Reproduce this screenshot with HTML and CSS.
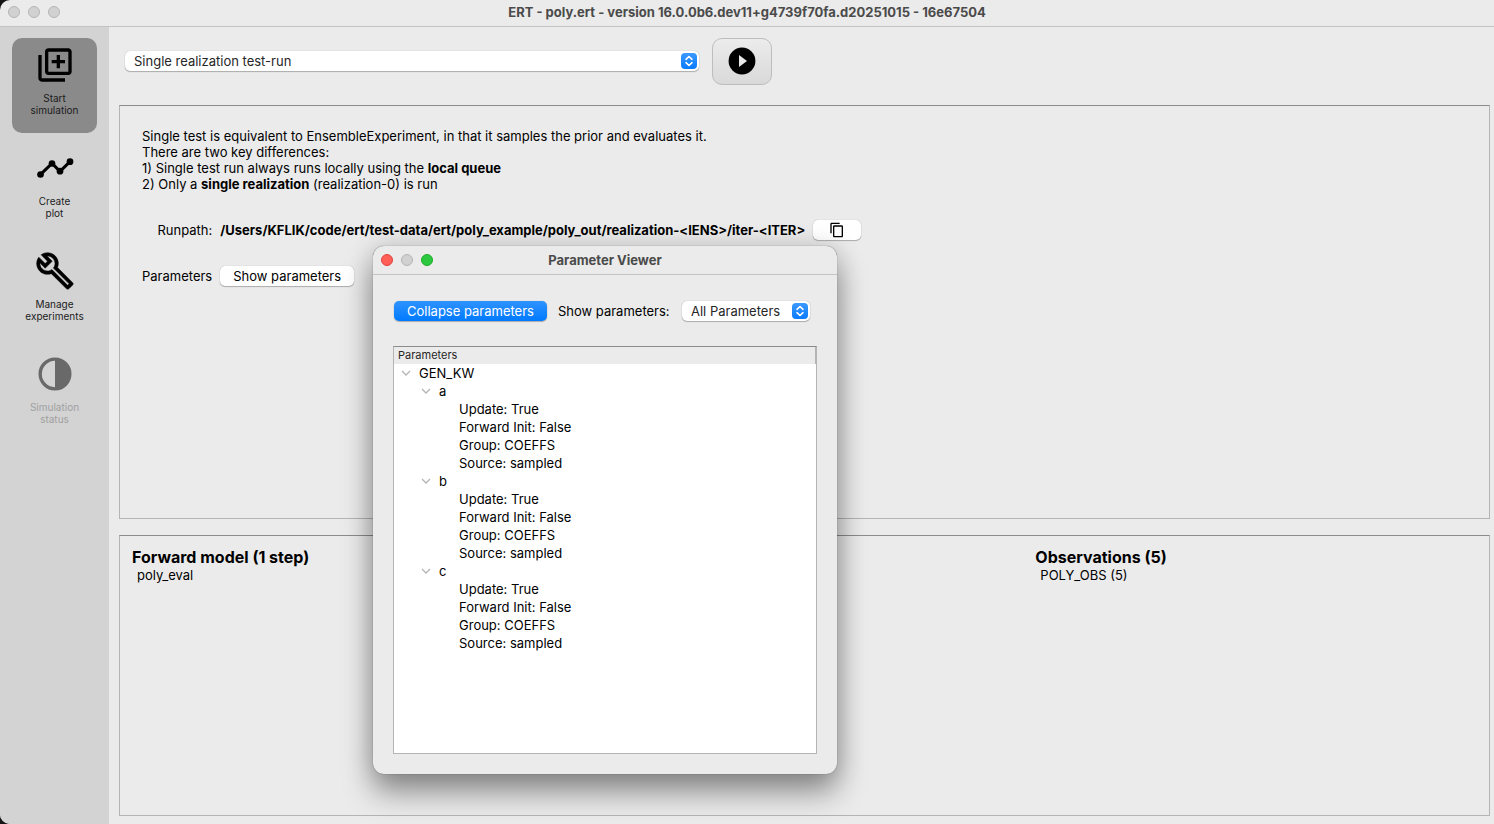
FILE: index.html
```html
<!DOCTYPE html>
<html lang="en">
<head>
    <meta charset="UTF-8">
    <title>ERT - poly.ert</title>
    <link rel="stylesheet" href="styles.css">
</head>
<body>
    <div class="window">
        <header class="titlebar">
            <div class="lights">
                <span class="light"></span>
                <span class="light"></span>
                <span class="light"></span>
            </div>
            <h1>ERT - poly.ert - version 16.0.0b6.dev11+g4739f70fa.d20251015 - 16e67504</h1>
        </header>

        <div class="main">
            <nav class="sidebar">
                <button class="nav-btn active" type="button">
                    <svg viewBox="0 0 24 24"><path d="M4 6H2v14c0 1.100.9 2 2 2h14v-2H4V6zm16-4H8c-1.100 0-2 .9-2 2v12c0 1.100.9 2 2 2h12c1.100 0 2-.9 2-2V4c0-1.100-.9-2-2-2zm0 14H8V4h12v12zm-7-2h2v-3h3V9h-3V6h-2v3h-3v2h3z"/></svg>
                    <span>Start<br>simulation</span>
                </button>
                <button class="nav-btn" type="button">
                    <svg viewBox="0 0 24 24"><path d="M3.200 16L10.200 9.200L15 14L21 8.200" fill="none" stroke="#000" stroke-width="1.800"/><circle cx="3.300" cy="15.900" r="2"/><circle cx="10.200" cy="9.300" r="2"/><circle cx="15" cy="13.900" r="2"/><circle cx="21" cy="8.200" r="2"/></svg>
                    <span>Create<br>plot</span>
                </button>
                <button class="nav-btn" type="button">
                    <svg viewBox="0 0 24 24"><path d="M22.610 18.990l-9.080-9.080c.93-2.340.45-5.100-1.440-7C9.790.61 6.210.4 3.660 2.260L7.500 6.110 6.080 7.520 2.250 3.690C.39 6.230.6 9.820 2.900 12.110c1.860 1.860 4.570 2.350 6.890 1.480l9.110 9.110c.39.39 1.020.39 1.410 0l2.300-2.300c.4-.38.4-1.010 0-1.410zm-3 1.600l-9.460-9.460c-.61.45-1.290.72-2 .82-1.360.2-2.790-.21-3.830-1.250C3.370 9.760 2.930 8.500 3 7.260l3.090 3.090 4.240-4.240-3.090-3.090c1.240-.07 2.490.37 3.440 1.310 1.080 1.080 1.490 2.570 1.240 3.960-.12.71-.42 1.370-.88 1.960l9.450 9.450-.88.89z" stroke="#000" stroke-width=".3"/></svg>
                    <span>Manage<br>experiments</span>
                </button>
                <button class="nav-btn" type="button" disabled>
                    <svg viewBox="0 0 24 24"><circle cx="12" cy="12" r="8.900" fill="none" stroke="#696969" stroke-width="2"/><path d="M12 2.500a9.500 9.500 0 0 1 0 19z" fill="#696969"/></svg>
                    <span>Simulation<br>status</span>
                </button>
            </nav>

            <main class="content">
                <div class="run-bar">
                    <div class="select run-select">
                        <select aria-label="Experiment type">
                            <option>Single realization test-run</option>
                        </select>
                        <svg class="stepper" viewBox="0 0 16 16"><path d="M5 6.300L8 3.500L11 6.300M5 9.700L8 12.500L11 9.700"/></svg>
                    </div>
                    <button class="run-btn" type="button" aria-label="Run">
                        <svg viewBox="0 0 28 28"><circle cx="14" cy="14" r="13.400"/><path d="M11 8v12l8-6z" fill="#e8e8e8"/></svg>
                    </button>
                </div>

                <section class="panel experiment">
                    <p>
                        Single test is equivalent to EnsembleExperiment, in that it samples the prior and evaluates it.<br>
                        There are two key differences:<br>
                        1) Single test run always runs locally using the <b>local queue</b><br>
                        2) Only a <b>single realization</b> (realization-0) is run
                    </p>
                    <div class="fields">
                        <span class="label">Runpath:</span>
                        <div class="runpath">
                            <b>/Users/KFLIK/code/ert/test-data/ert/poly_example/poly_out/realization-&lt;IENS&gt;/iter-&lt;ITER&gt;</b>
                            <button class="btn copy-btn" type="button" aria-label="Copy runpath">
                                <svg viewBox="0 0 24 24"><path d="M16 1H4c-1.100 0-2 .9-2 2v14h2V3h12V1zm3 4H8c-1.100 0-2 .9-2 2v14c0 1.100.9 2 2 2h11c1.100 0 2-.9 2-2V7c0-1.100-.9-2-2-2zm0 16H8V7h11v14z"/></svg>
                            </button>
                        </div>
                        <span class="label">Parameters</span>
                        <button class="btn show-btn" type="button">Show parameters</button>
                    </div>
                </section>

                <section class="panel summary">
                    <div class="forward-model">
                        <h2>Forward model (1 step)</h2>
                        <div class="item">poly_eval</div>
                    </div>
                    <div class="observations">
                        <h2>Observations (5)</h2>
                        <div class="item">POLY_OBS (5)</div>
                    </div>
                </section>
            </main>
        </div>

        <div class="dialog" role="dialog" aria-labelledby="dialog-title">
            <div class="titlebar">
                <div class="lights">
                    <span class="light red"></span>
                    <span class="light"></span>
                    <span class="light green"></span>
                </div>
                <h1 id="dialog-title">Parameter Viewer</h1>
            </div>
            <div class="dialog-body">
                <div class="toolbar">
                    <button class="btn primary" type="button">Collapse parameters</button>
                    <label for="filter">Show parameters:</label>
                    <div class="select filter-select">
                        <select id="filter">
                            <option>All Parameters</option>
                        </select>
                        <svg class="stepper" viewBox="0 0 16 16"><path d="M5 6.300L8 3.500L11 6.300M5 9.700L8 12.500L11 9.700"/></svg>
                    </div>
                </div>
                <div class="tree">
                    <div class="tree-head">Parameters</div>
                    <details open>
                        <summary><svg class="chevron" viewBox="0 0 10 10"><path d="M1 3L5 7L9 3"/></svg>GEN_KW</summary>
                        <details open>
                            <summary><svg class="chevron" viewBox="0 0 10 10"><path d="M1 3L5 7L9 3"/></svg>a</summary>
                            <ul>
                                <li>Update: True</li>
                                <li>Forward Init: False</li>
                                <li>Group: COEFFS</li>
                                <li>Source: sampled</li>
                            </ul>
                        </details>
                        <details open>
                            <summary><svg class="chevron" viewBox="0 0 10 10"><path d="M1 3L5 7L9 3"/></svg>b</summary>
                            <ul>
                                <li>Update: True</li>
                                <li>Forward Init: False</li>
                                <li>Group: COEFFS</li>
                                <li>Source: sampled</li>
                            </ul>
                        </details>
                        <details open>
                            <summary><svg class="chevron" viewBox="0 0 10 10"><path d="M1 3L5 7L9 3"/></svg>c</summary>
                            <ul>
                                <li>Update: True</li>
                                <li>Forward Init: False</li>
                                <li>Group: COEFFS</li>
                                <li>Source: sampled</li>
                            </ul>
                        </details>
                    </details>
                </div>
            </div>
        </div>
    </div>
</body>
</html>
```
FILE: styles.css
```css
*{
    box-sizing: border-box;
}
html{
    background: #151515;
}
body{
    margin: 0;
    font-family: Inter, "Liberation Sans", sans-serif;
    font-size: 13px;
    line-height: 16px;
    color: #000;
}
button, select{
    font: inherit;
    color: inherit;
    margin: 0;
    border: 0;
}
.window{
    position: relative;
    display: flex;
    flex-direction: column;
    min-height: 100vh;
    background: #ebebeb;
    border-radius: 10px 0 0 10px;
    overflow: hidden;
}

/* title bars */
.titlebar{
    display: grid;
    grid-template-columns: 1fr auto 1fr;
    align-items: center;
    height: 27px;
    padding: 0 8px;
    border-bottom: 1px solid #c4c4c4;
    color: #4a4a4a;
}
.titlebar h1{
    margin: 0;
    font-size: 13px;
    line-height: 16px;
    font-weight: 700;
}
.window > .titlebar{
    padding-bottom: 3px;
}
.lights{
    display: flex;
    gap: 8px;
}
.light{
    width: 12px;
    height: 12px;
    border: 1px solid #b5b5b5;
    border-radius: 50%;
    background: #d1d1d1;
}
.light.red{
    background: #ff5f57;
    border-color: #e0443e;
}
.light.green{
    background: #2bc840;
    border-color: #1dad2b;
}

/* sidebar */
.main{
    flex: 1;
    display: flex;
}
.sidebar{
    flex: none;
    display: flex;
    flex-direction: column;
    gap: 8px;
    width: 109px;
    padding: 11px 12px;
    background: #d3d3d3;
}
.nav-btn{
    display: flex;
    flex-direction: column;
    align-items: center;
    gap: 7px;
    height: 95px;
    padding: 7px 0 0;
    border-radius: 10px;
    background: none;
    font-size: 10px;
    line-height: 12px;
    color: #1c1c1c;
}
.nav-btn svg{
    width: 40px;
    height: 40px;
}
.nav-btn.active{
    background: #8a8a8a;
}
.nav-btn:disabled{
    color: #a0a0a0;
}

/* content */
.content{
    flex: 1;
    display: flex;
    flex-direction: column;
    padding: 0 4px 8px 10px;
}
.run-bar{
    display: flex;
    align-items: center;
    gap: 13px;
    height: 78px;
    padding: 0 6px 10px;
}
.select{
    position: relative;
}
.select select{
    display: block;
    width: 100%;
    height: 20px;
    padding: 0 24px 0 9px;
    appearance: none;
    border-radius: 5px;
    background: #fff;
    box-shadow: 0 0 1px rgba(0, 0, 0, 0.3), 0 1px 1px rgba(0, 0, 0, 0.25);
    color: #262626;
}
.stepper{
    position: absolute;
    top: 2px;
    right: 2px;
    width: 16px;
    height: 16px;
    border-radius: 4px;
    background: linear-gradient(#3c9aff, #0a7aff);
    fill: none;
    stroke: #fff;
    stroke-width: 1.600;
    stroke-linecap: round;
    stroke-linejoin: round;
    pointer-events: none;
}
.run-select{
    width: 574px;
}
.run-btn{
    display: flex;
    align-items: center;
    justify-content: center;
    width: 60px;
    height: 47px;
    border: 1px solid #bdbdbd;
    border-radius: 10px;
    background: linear-gradient(#ececec, #d9d9d9);
}
.run-btn svg{
    width: 28px;
    height: 28px;
}
.panel{
    border: 1px solid #b4b4b4;
    border-top-color: #8c8c8c;
}
.experiment{
    flex: 368 0 0;
    padding: 22px;
}
.experiment p{
    margin: 0;
}
b{
    font-weight: 700;
}
.fields{
    display: grid;
    grid-template-columns: max-content max-content;
    align-items: center;
    gap: 25px 8px;
    margin-top: 27px;
}
.label{
    text-align: right;
}
.runpath{
    display: flex;
    align-items: center;
    gap: 8px;
    height: 22px;
}
.btn{
    height: 20px;
    padding: 0 13px;
    border-radius: 5px;
    background: #fff;
    box-shadow: 0 0 1px rgba(0, 0, 0, 0.3), 0 1px 1px rgba(0, 0, 0, 0.25);
    white-space: nowrap;
}
.copy-btn{
    display: flex;
    align-items: center;
    justify-content: center;
    width: 48px;
}
.copy-btn svg{
    flex: none;
    width: 16px;
    height: 16px;
}
.show-btn{
    justify-self: start;
}
.summary{
    flex: 267 0 0;
    display: grid;
    grid-template-columns: repeat(3, 1fr);
    align-content: start;
    margin-top: 16px;
    padding: 12px 2px 0 12px;
}
.observations{
    grid-column: 3;
}
.summary h2{
    margin: 0;
    font-size: 16px;
    line-height: 19px;
    font-weight: 700;
}
.item{
    padding-left: 5px;
}

/* parameter viewer */
.dialog{
    position: absolute;
    top: 246px;
    left: 373px;
    width: 464px;
    border-radius: 11px;
    background: #ebebeb;
    box-shadow: 0 0 1px rgba(0, 0, 0, 0.6), 0 18px 30px rgba(0, 0, 0, 0.4), 0 0 26px rgba(0, 0, 0, 0.14);
}
.dialog .titlebar{
    height: 29px;
}
.dialog-body{
    padding: 25px 20px 20px;
}
.toolbar{
    display: flex;
    align-items: center;
    gap: 11px;
    height: 22px;
    margin-bottom: 24px;
    padding: 0 7px 0 1px;
    white-space: nowrap;
}
.primary{
    background: linear-gradient(#2f93ff, #007aff);
    color: #fff;
}
.filter-select{
    flex: none;
    width: 128px;
    margin-left: auto;
}
.tree{
    min-height: 408px;
    border: 1px solid #b4b4b4;
    border-top-color: #8c8c8c;
    background: #fff;
    line-height: 18px;
}
.tree-head{
    height: 17px;
    padding-left: 4px;
    border-right: 1px solid #b4b4b4;
    background: #ebebeb;
    font-size: 11px;
    line-height: 17px;
    color: #262626;
}
summary{
    display: flex;
    align-items: center;
    gap: 8px;
    height: 18px;
    padding-left: 7px;
    list-style: none;
}
details details{
    padding-left: 20px;
}
.chevron{
    width: 10px;
    height: 10px;
    fill: none;
    stroke: #b4b4b4;
    stroke-width: 1.300;
}
.tree ul{
    margin: 0;
    padding: 0 0 0 45px;
    list-style: none;
}
```
